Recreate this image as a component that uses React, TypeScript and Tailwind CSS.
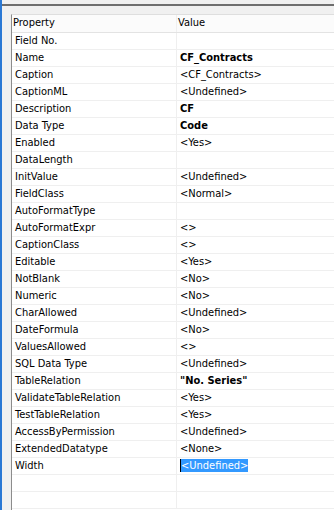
import type { ReactNode } from 'react';

type Prop = { name: string; value?: string; bold?: boolean; selected?: boolean };

const props: Prop[] = [
  { name: 'Field No.' },
  { name: 'Name', value: 'CF_Contracts', bold: true },
  { name: 'Caption', value: '<CF_Contracts>' },
  { name: 'CaptionML', value: '<Undefined>' },
  { name: 'Description', value: 'CF', bold: true },
  { name: 'Data Type', value: 'Code', bold: true },
  { name: 'Enabled', value: '<Yes>' },
  { name: 'DataLength' },
  { name: 'InitValue', value: '<Undefined>' },
  { name: 'FieldClass', value: '<Normal>' },
  { name: 'AutoFormatType' },
  { name: 'AutoFormatExpr', value: '<>' },
  { name: 'CaptionClass', value: '<>' },
  { name: 'Editable', value: '<Yes>' },
  { name: 'NotBlank', value: '<No>' },
  { name: 'Numeric', value: '<No>' },
  { name: 'CharAllowed', value: '<Undefined>' },
  { name: 'DateFormula', value: '<No>' },
  { name: 'ValuesAllowed', value: '<>' },
  { name: 'SQL Data Type', value: '<Undefined>' },
  { name: 'TableRelation', value: '"No. Series"', bold: true },
  { name: 'ValidateTableRelation', value: '<Yes>' },
  { name: 'TestTableRelation', value: '<Yes>' },
  { name: 'AccessByPermission', value: '<Undefined>' },
  { name: 'ExtendedDatatype', value: '<None>' },
  { name: 'Width', value: '<Undefined>', selected: true },
  { name: '' },
  { name: '' },
];

export default function App() {
  return (
    <div className="flex h-[510px] w-[334px] overflow-hidden bg-[#f0f0f0] text-[11px] text-black [font-family:'DejaVu_Sans_Condensed','Liberation_Sans',sans-serif]">
      <div className="w-[2px] shrink-0 bg-[#2a78d4]" />
      <div className="flex min-w-0 flex-1 flex-col">
        <div className="h-[4px] shrink-0" />
        <div className="h-[2px] shrink-0 bg-[#6e6e6e]" />
        <div className="h-[8px] shrink-0" />
        <div className="flex min-h-0 flex-1">
          <div className="w-[9px] shrink-0" />
          <div className="min-w-0 flex-1 border-l border-t border-l-[#8c8c8c] border-t-[#dedede] bg-white">
            <Row header left="Property" right="Value" />
            {props.map((p, i) => (
              <Row
                key={i}
                left={p.name}
                right={
                  p.selected ? (
                    <span className="inline-block border-l border-black bg-[#3399ff] leading-[13px] text-white">{p.value}</span>
                  ) : (
                    p.value
                  )
                }
                bold={p.bold}
              />
            ))}
          </div>
        </div>
      </div>
    </div>
  );
}

function Row({ left, right, bold, header }: { left: string; right?: ReactNode; bold?: boolean; header?: boolean }) {
  return (
    <div className={`flex h-[17px] border-b ${header ? 'h-[18px] border-[#e3e3e3] bg-[#fbfbfb]' : 'border-[#efefef]'}`}>
      <div className={`flex w-[165px] shrink-0 items-center border-r border-[#efefef] ${header ? 'pl-[1px]' : 'pl-[3px]'}`}>
        <span className="whitespace-nowrap">{left}</span>
      </div>
      <div className={`flex min-w-0 flex-1 items-center ${header ? 'pl-[1px]' : 'pl-[3px]'} ${bold ? 'font-bold' : ''}`}>
        <span className="whitespace-nowrap">{right}</span>
      </div>
    </div>
  );
}
